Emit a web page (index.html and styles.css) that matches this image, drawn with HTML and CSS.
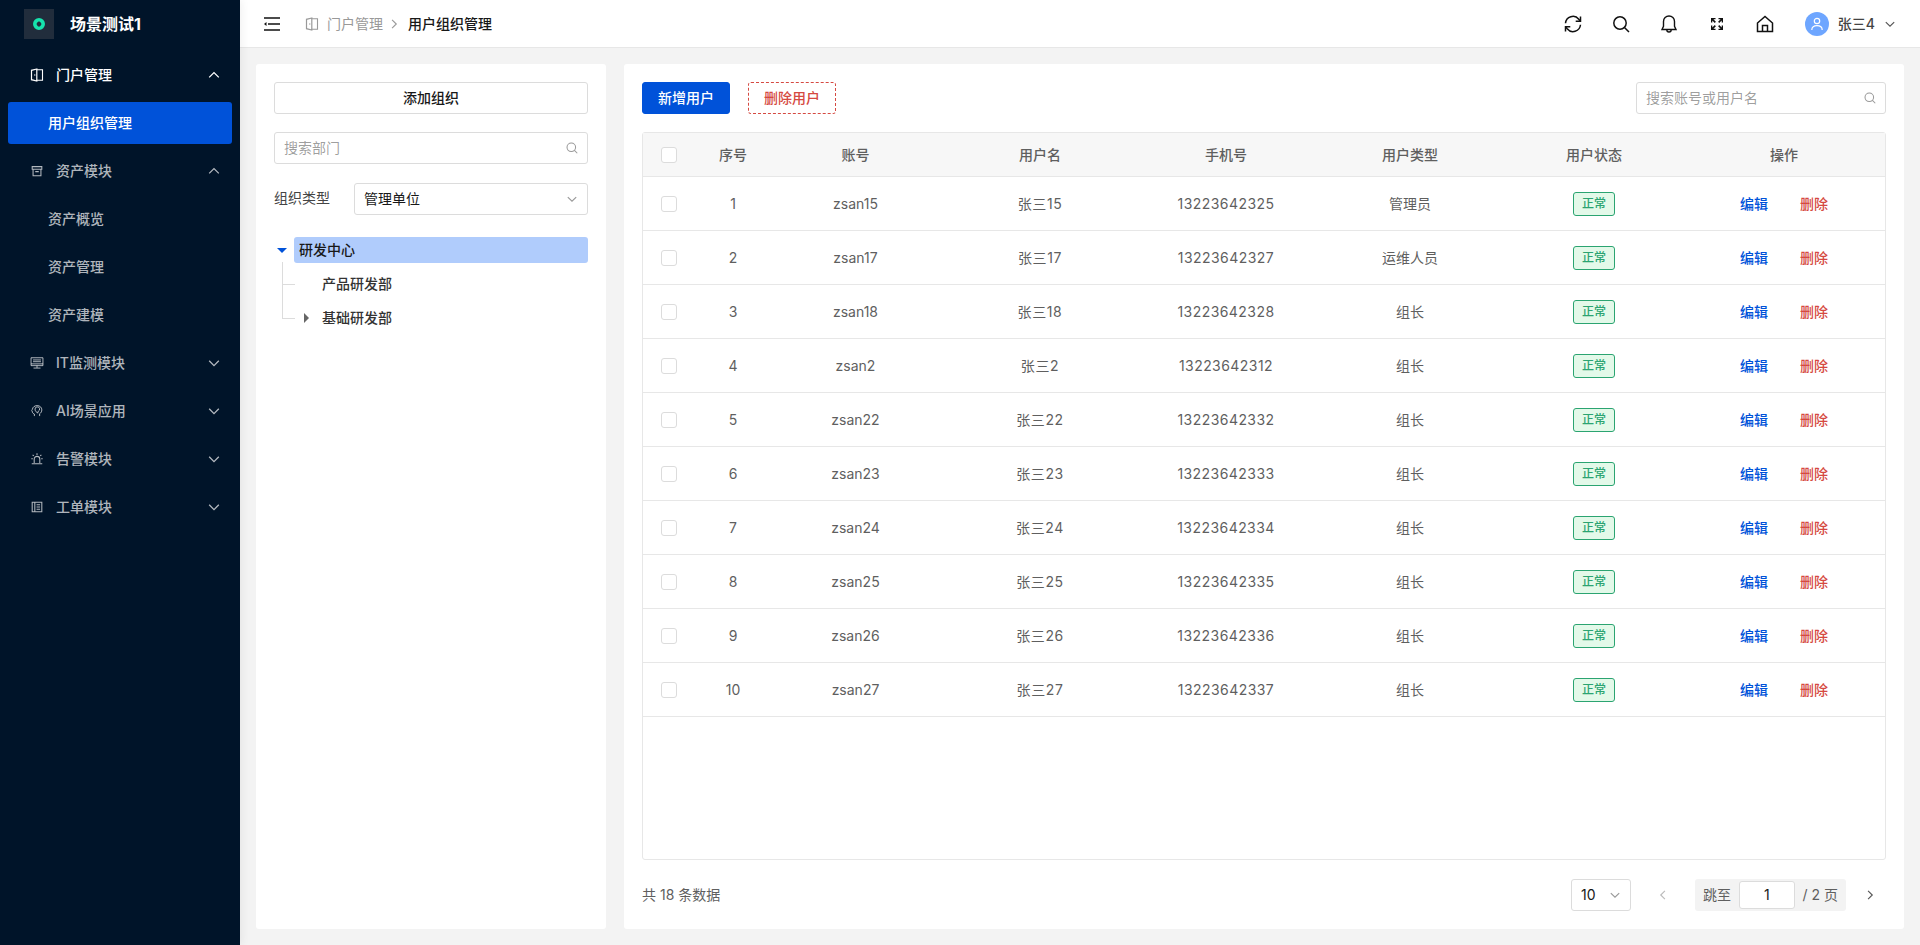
FILE: index.html
```html
<!DOCTYPE html>
<html lang="zh-CN">
<head>
<meta charset="utf-8">
<title>用户组织管理</title>
<link rel="stylesheet" href="styles.css">
</head>
<body>
<svg class="defs" width="0" height="0" aria-hidden="true">
  <defs>
    <symbol id="i-chev-up" viewBox="0 0 16 16"><path d="M3.200 10.400 8 5.600l4.800 4.800" fill="none" stroke="currentColor" stroke-width="1.300"/></symbol>
    <symbol id="i-chev-down" viewBox="0 0 16 16"><path d="M3.200 5.800 8 10.600l4.800-4.800" fill="none" stroke="currentColor" stroke-width="1.300"/></symbol>
    <symbol id="i-chev-left" viewBox="0 0 16 16"><path d="M10.200 3.200 5.400 8l4.800 4.800" fill="none" stroke="currentColor" stroke-width="1.300"/></symbol>
    <symbol id="i-chev-right" viewBox="0 0 16 16"><path d="M5.800 3.200 10.600 8l-4.800 4.800" fill="none" stroke="currentColor" stroke-width="1.300"/></symbol>
    <symbol id="i-search" viewBox="0 0 16 16"><circle cx="7.200" cy="7.200" r="4.900" fill="none" stroke="currentColor" stroke-width="1.200"/><path d="m10.800 10.800 3.200 3.200" fill="none" stroke="currentColor" stroke-width="1.200"/></symbol>
    <symbol id="i-portal" viewBox="0 0 14 14"><path d="M6.500 1.700h6v10.600h-6" fill="none" stroke="currentColor" stroke-width="1.100"/><path d="M6.800 1 1.500 2.300v9.400L6.800 13z" fill="none" stroke="currentColor" stroke-width="1.200"/><path d="M4.800 6.300v1.400" stroke="currentColor" stroke-width="1"/></symbol>
    <symbol id="i-box" viewBox="0 0 16 16"><path d="M2.500 3h11v3h-11zM3.500 6v7.500h9V6M6 8.700h4" fill="none" stroke="currentColor" stroke-width="1.200"/></symbol>
    <symbol id="i-monitor" viewBox="0 0 16 16"><path d="M1.200 2h13.600v9H1.200zM3.500 4.500h9M3.500 6.500h9M1.200 9h13.600M8 11v2.500M4 13.800h8" fill="none" stroke="currentColor" stroke-width="1.100"/></symbol>
    <symbol id="i-ai" viewBox="0 0 16 16"><path d="M5 13.800v-2.300C2.800 10.800 2.500 9 2.500 8c-.8-.4-.6-1 .2-1.800C3 3.500 5.300 1.800 8.300 1.800c3 0 5.200 2.200 5.200 4.900 0 2.300-1.300 3.600-2.500 4.500v2.600M5.800 5.800a2.600 2.600 0 1 1 3.700 2.400L8.700 10.500 6.600 8.200a2.600 2.600 0 0 1-.8-2.400z" fill="none" stroke="currentColor" stroke-width="1.100"/></symbol>
    <symbol id="i-alarm" viewBox="0 0 16 16"><path d="M4.800 12.500V8.200a3.200 3.200 0 0 1 6.400 0v4.300M2 13.500h12M8 1.500v2M3 3.200l1.300 1.300M13 3.200l-1.300 1.300M1.500 7.700h1.700M12.800 7.700h1.700" fill="none" stroke="currentColor" stroke-width="1.200"/></symbol>
    <symbol id="i-order" viewBox="0 0 16 16"><path d="M2.500 2.500h11v11h-11zM5.500 2.500v11M7.500 5.500h4M7.500 8h4M7.500 10.500h4" fill="none" stroke="currentColor" stroke-width="1.200"/></symbol>
  </defs>
</svg>

<aside class="sidebar">
  <div class="brand">
    <div class="brand-logo">
      <svg viewBox="0 0 14 14" width="14" height="14"><path fill-rule="evenodd" d="M7 1a6 6 0 1 1 0 12A6 6 0 0 1 7 1zm0 3.200C5.400 5 4.800 6 4.600 7c.2 1 .8 2 2.400 2.800C8.600 9 9.200 8 9.400 7 9.200 6 8.600 5 7 4.200z" fill="#16e3ad"/></svg>
    </div>
    <span class="brand-name">场景测试1</span>
  </div>
  <nav class="menu">
    <div class="menu-item open"><svg class="menu-icon"><use href="#i-portal"/></svg><span class="menu-text">门户管理</span><svg class="menu-arrow"><use href="#i-chev-up"/></svg></div>
    <div class="menu-sub active">用户组织管理</div>
    <div class="menu-item"><svg class="menu-icon"><use href="#i-box"/></svg><span class="menu-text">资产模块</span><svg class="menu-arrow"><use href="#i-chev-up"/></svg></div>
    <div class="menu-sub">资产概览</div>
    <div class="menu-sub">资产管理</div>
    <div class="menu-sub">资产建模</div>
    <div class="menu-item"><svg class="menu-icon"><use href="#i-monitor"/></svg><span class="menu-text">IT监测模块</span><svg class="menu-arrow"><use href="#i-chev-down"/></svg></div>
    <div class="menu-item"><svg class="menu-icon"><use href="#i-ai"/></svg><span class="menu-text">AI场景应用</span><svg class="menu-arrow"><use href="#i-chev-down"/></svg></div>
    <div class="menu-item"><svg class="menu-icon"><use href="#i-alarm"/></svg><span class="menu-text">告警模块</span><svg class="menu-arrow"><use href="#i-chev-down"/></svg></div>
    <div class="menu-item"><svg class="menu-icon"><use href="#i-order"/></svg><span class="menu-text">工单模块</span><svg class="menu-arrow"><use href="#i-chev-down"/></svg></div>
  </nav>
</aside>

<div class="main">
  <header class="topbar">
    <svg class="fold-icon" viewBox="0 0 18 14" width="18" height="14"><path d="M1 1h16M5 7h12M1 13h16" fill="none" stroke="#111" stroke-width="1.500"/><path d="M1 7l2.500-2v4z" fill="#111"/></svg>
    <nav class="crumbs">
      <svg class="crumb-icon"><use href="#i-portal"/></svg>
      <span class="crumb-parent">门户管理</span>
      <svg class="crumb-sep"><use href="#i-chev-right"/></svg>
      <span class="crumb-current">用户组织管理</span>
    </nav>
    <div class="tools">
      <svg class="tool" viewBox="0 0 20 20"><path d="M2.500 9.200A7.500 7.500 0 0 1 15.800 5.200L17 6.800M17.500 10.800A7.500 7.500 0 0 1 4.200 14.800L3 13.200" fill="none" stroke="#111" stroke-width="1.500"/><path d="M17.500 2.500v4.800h-4.800M2.500 17.500v-4.800h4.800" fill="none" stroke="#111" stroke-width="1.500"/></svg>
      <svg class="tool" viewBox="0 0 20 20"><circle cx="9" cy="9" r="6.200" fill="none" stroke="#111" stroke-width="1.500"/><path d="m13.500 13.500 4.500 4.500" fill="none" stroke="#111" stroke-width="1.500"/></svg>
      <svg class="tool" viewBox="0 0 20 20"><path d="M10 2a5.500 5.500 0 0 0-5.500 5.500v4.800L3 15.500h14l-1.500-3.200V7.500A5.500 5.500 0 0 0 10 2zM7.800 15.800c0 1.300 1 2.200 2.200 2.200s2.200-.9 2.200-2.200" fill="none" stroke="#111" stroke-width="1.400"/></svg>
      <svg class="tool" viewBox="0 0 20 20"><path d="M4 4h4.500v1.300H6.400l2.500 2.500-1.100 1.100-2.500-2.500v2.100H4zM16 4h-4.500v1.300h2.100l-2.500 2.500 1.100 1.100 2.500-2.500v2.100H16zM4 16h4.500v-1.300H6.400l2.500-2.500-1.100-1.100-2.500 2.500v-2.100H4zM16 16h-4.500v-1.300h2.100l-2.500-2.500 1.100-1.100 2.500 2.500v-2.100H16z" fill="#111"/></svg>
      <svg class="tool" viewBox="0 0 20 20"><path d="M2.500 9 10 2.500 17.500 9v8.500h-15zM7.500 17.500v-6h5v6" fill="none" stroke="#111" stroke-width="1.500"/></svg>
    </div>
    <div class="user">
      <span class="avatar"><svg viewBox="0 0 16 16" width="16" height="16"><circle cx="8" cy="5" r="2.700" fill="none" stroke="#fff" stroke-width="1.200"/><path d="M2.800 14c0-3 2-4.300 5.200-4.300s5.200 1.300 5.200 4.300" fill="none" stroke="#fff" stroke-width="1.200"/></svg></span>
      <span class="user-name">张三4</span>
      <svg class="user-arrow"><use href="#i-chev-down"/></svg>
    </div>
  </header>

  <main class="content">
    <section class="panel org">
      <button class="btn btn-outline">添加组织</button>
      <div class="input org-search"><span class="placeholder">搜索部门</span><svg class="input-icon"><use href="#i-search"/></svg></div>
      <div class="org-type">
        <span class="org-label">组织类型</span>
        <div class="input org-select"><span class="value">管理单位</span><svg class="input-icon"><use href="#i-chev-down"/></svg></div>
      </div>
      <div class="tree">
        <div class="tree-root">
          <span class="caret-down"></span>
          <span class="tree-selected">研发中心</span>
        </div>
        <div class="tree-children">
          <div class="tree-node"><span class="tree-label">产品研发部</span></div>
          <div class="tree-node"><span class="caret-right"></span><span class="tree-label">基础研发部</span></div>
        </div>
      </div>
    </section>

    <section class="panel users">
      <div class="toolbar">
        <button class="btn btn-primary">新增用户</button>
        <button class="btn btn-danger">删除用户</button>
        <div class="input user-search"><span class="placeholder">搜索账号或用户名</span><svg class="input-icon"><use href="#i-search"/></svg></div>
      </div>
      <div class="table-wrap">
        <table class="table">
          <colgroup>
            <col class="c-check"><col class="c-no"><col class="c-acc"><col class="c-name"><col class="c-phone"><col class="c-type"><col class="c-state"><col class="c-op">
          </colgroup>
          <thead>
            <tr><th><span class="check"></span></th><th>序号</th><th>账号</th><th>用户名</th><th>手机号</th><th>用户类型</th><th>用户状态</th><th class="op-cell">操作</th></tr>
          </thead>
          <tbody>
            <tr><td><span class="check"></span></td><td>1</td><td>zsan15</td><td class="uname">张三15</td><td class="phone">13223642325</td><td>管理员</td><td><span class="tag">正常</span></td><td class="op-cell"><a class="op-edit">编辑</a><a class="op-del">删除</a></td></tr>
            <tr><td><span class="check"></span></td><td>2</td><td>zsan17</td><td class="uname">张三17</td><td class="phone">13223642327</td><td>运维人员</td><td><span class="tag">正常</span></td><td class="op-cell"><a class="op-edit">编辑</a><a class="op-del">删除</a></td></tr>
            <tr><td><span class="check"></span></td><td>3</td><td>zsan18</td><td class="uname">张三18</td><td class="phone">13223642328</td><td>组长</td><td><span class="tag">正常</span></td><td class="op-cell"><a class="op-edit">编辑</a><a class="op-del">删除</a></td></tr>
            <tr><td><span class="check"></span></td><td>4</td><td>zsan2</td><td class="uname">张三2</td><td class="phone">13223642312</td><td>组长</td><td><span class="tag">正常</span></td><td class="op-cell"><a class="op-edit">编辑</a><a class="op-del">删除</a></td></tr>
            <tr><td><span class="check"></span></td><td>5</td><td>zsan22</td><td class="uname">张三22</td><td class="phone">13223642332</td><td>组长</td><td><span class="tag">正常</span></td><td class="op-cell"><a class="op-edit">编辑</a><a class="op-del">删除</a></td></tr>
            <tr><td><span class="check"></span></td><td>6</td><td>zsan23</td><td class="uname">张三23</td><td class="phone">13223642333</td><td>组长</td><td><span class="tag">正常</span></td><td class="op-cell"><a class="op-edit">编辑</a><a class="op-del">删除</a></td></tr>
            <tr><td><span class="check"></span></td><td>7</td><td>zsan24</td><td class="uname">张三24</td><td class="phone">13223642334</td><td>组长</td><td><span class="tag">正常</span></td><td class="op-cell"><a class="op-edit">编辑</a><a class="op-del">删除</a></td></tr>
            <tr><td><span class="check"></span></td><td>8</td><td>zsan25</td><td class="uname">张三25</td><td class="phone">13223642335</td><td>组长</td><td><span class="tag">正常</span></td><td class="op-cell"><a class="op-edit">编辑</a><a class="op-del">删除</a></td></tr>
            <tr><td><span class="check"></span></td><td>9</td><td>zsan26</td><td class="uname">张三26</td><td class="phone">13223642336</td><td>组长</td><td><span class="tag">正常</span></td><td class="op-cell"><a class="op-edit">编辑</a><a class="op-del">删除</a></td></tr>
            <tr><td><span class="check"></span></td><td>10</td><td>zsan27</td><td class="uname">张三27</td><td class="phone">13223642337</td><td>组长</td><td><span class="tag">正常</span></td><td class="op-cell"><a class="op-edit">编辑</a><a class="op-del">删除</a></td></tr>
          </tbody>
        </table>
      </div>
      <footer class="pager">
        <span class="total">共 18 条数据</span>
        <div class="input page-size"><span class="value">10</span><svg class="input-icon"><use href="#i-chev-down"/></svg></div>
        <svg class="page-arrow disabled"><use href="#i-chev-left"/></svg>
        <div class="jump">
          <span>跳至</span>
          <span class="jump-input">1</span>
          <span>/ 2 页</span>
        </div>
        <svg class="page-arrow"><use href="#i-chev-right"/></svg>
      </footer>
    </section>
  </main>
</div>
</body>
</html>
```
FILE: styles.css
```css
* { box-sizing: border-box; }
html, body { height: 100%; }
body {
  margin: 0;
  display: flex;
  height: 100vh;
  overflow: hidden;
  background: #f3f3f3;
  color: #181818;
  font: 14px/22px Inter, "Noto Sans CJK SC", sans-serif;
}
.defs { position: absolute; }

.sidebar {
  width: 240px;
  flex: none;
  background: #001429;
  box-shadow: 2px 0 8px rgba(0, 0, 0, .06);
  position: relative;
  z-index: 1;
}
.brand { height: 51px; display: flex; align-items: flex-start; padding: 9px 0 0 24px; }
.brand-logo {
  width: 30px; height: 30px;
  background: #212d3c;
  display: flex; align-items: center; justify-content: center;
}
.brand-name { margin: 3px 0 0 16px; font-size: 16px; line-height: 24px; font-weight: 700; color: #fff; }
.menu { display: flex; flex-direction: column; gap: 6px; padding: 3px 8px; }
.menu-item, .menu-sub {
  height: 42px;
  display: flex;
  align-items: center;
  font-weight: 500;
  color: rgba(255, 255, 255, .7);
  border-radius: 3px;
}
.menu-item { padding: 0 10px 0 22px; }
.menu-item.open { color: #fff; }
.menu-sub { padding-left: 40px; }
.menu-sub.active { background: #0052d9; color: #fff; }
.menu-icon { width: 14px; height: 14px; margin-right: 12px; flex: none; }
.menu-text { flex: 1; }
.menu-arrow { width: 16px; height: 16px; flex: none; }

.main { flex: 1; min-width: 0; display: flex; flex-direction: column; }
.topbar {
  height: 48px;
  flex: none;
  background: #fff;
  border-bottom: 1px solid #e7e7e7;
  display: flex;
  align-items: center;
  padding: 0 23px 0 23px;
}
.fold-icon { flex: none; }
.crumbs { display: flex; align-items: center; margin-left: 24px; flex: 1; }
.crumb-icon { width: 14px; height: 14px; color: #999; margin-right: 8px; }
.crumb-parent { color: #999; }
.crumb-sep { width: 14px; height: 14px; color: #999; margin: 0 7px 0 4px; }
.crumb-current { color: #181818; font-weight: 500; }
.tools { display: flex; gap: 28px; }
.tool { width: 20px; height: 20px; display: block; }
.user { display: flex; align-items: center; margin-left: 30px; }
.avatar {
  width: 24px; height: 24px;
  border-radius: 50%;
  background: #6ea6ff;
  display: flex; align-items: center; justify-content: center;
}
.user-name { margin-left: 9px; color: #444; font-weight: 500; }
.user-arrow { width: 14px; height: 14px; color: #555; margin-left: 8px; }

.content { flex: 1; min-height: 0; display: flex; gap: 18px; padding: 16px; }
.panel { background: #fff; border-radius: 3px; padding: 18px; display: flex; flex-direction: column; }
.org { width: 350px; flex: none; }
.users { flex: 1; min-width: 0; }

.btn {
  height: 32px;
  border-radius: 3px;
  font: inherit;
  font-weight: 500;
  cursor: pointer;
  background: #fff;
}
.btn-outline { border: 1px solid #dcdcdc; color: #181818; width: 100%; }
.btn-primary { width: 88px; border: 1px solid #0052d9; background: #0052d9; color: #fff; }
.btn-danger { width: 88px; border: 1px dashed #d54941; color: #d54941; margin-left: 18px; }

.input {
  height: 32px;
  border: 1px solid #dcdcdc;
  border-radius: 3px;
  background: #fff;
  display: flex;
  align-items: center;
  justify-content: space-between;
  padding: 0 8px 0 9px;
}
.placeholder { color: rgba(0, 0, 0, .4); }
.value { color: #181818; }
.input-icon { width: 14px; height: 14px; color: #999; flex: none; }
.org-search { margin-top: 18px; }
.org-type { display: flex; align-items: center; margin-top: 19px; }
.org-label { width: 80px; color: #444; flex: none; padding-bottom: 3px; }
.org-select { flex: 1; }

.tree { margin-top: 22px; position: relative; }
.tree-root { height: 26px; display: flex; align-items: center; }
.caret-down {
  width: 0; height: 0;
  margin: 0 7px 0 3px;
  border: 5px solid transparent;
  border-top: 5px solid #0052d9;
  border-bottom: 0;
  flex: none;
}
.tree-selected {
  flex: 1;
  height: 26px;
  line-height: 26px;
  padding-left: 5px;
  background: #b0ccfc;
  border-radius: 3px;
  color: #181818;
  font-weight: 500;
}
.tree-children { position: relative; padding-top: 4px; }
.tree-children::before {
  content: "";
  position: absolute;
  left: 8px; top: -1px;
  width: 1px; height: 57px;
  background: #dcdcdc;
}
.tree-node {
  height: 34px;
  display: flex;
  align-items: center;
  position: relative;
  padding-left: 48px;
  font-weight: 500;
  color: #333;
}
.tree-node::before {
  content: "";
  position: absolute;
  left: 8px; top: 17px;
  width: 13px; height: 1px;
  background: #dcdcdc;
}
.caret-right {
  position: absolute;
  left: 30px; top: 12px;
  width: 0; height: 0;
  border: 5px solid transparent;
  border-left: 5px solid #666;
  border-right: 0;
}

.toolbar { display: flex; align-items: center; }
.user-search { width: 250px; margin-left: auto; }
.table-wrap {
  flex: none;
  height: 728px;
  margin-top: 18px;
  border: 1px solid #e7e7e7;
  border-radius: 3px;
}
.table { width: 100%; table-layout: fixed; border-collapse: separate; border-spacing: 0; }
.c-check { width: 52px; }
.c-no { width: 76px; }
.c-acc { width: 169px; }
.c-name { width: 200px; }
.c-phone { width: 172px; }
.c-type { width: 196px; }
.c-state { width: 172px; }
.c-op { width: 205px; }
.table th, .table td {
  padding: 0;
  text-align: center;
  color: #5f5f5f;
  border-bottom: 1px solid #e7e7e7;
}
.table th { height: 44px; background: #f7f7f7; font-weight: 500; }
.table td { height: 54px; }
.table .op-cell { padding-left: 3px; }
.phone { letter-spacing: .45px; }
.uname { letter-spacing: .6px; }
.check {
  display: block;
  width: 16px; height: 16px;
  margin-left: 18px;
  border: 1px solid #dcdcdc;
  border-radius: 3px;
  background: #fff;
}
.tag {
  display: inline-flex;
  align-items: center;
  justify-content: center;
  width: 42px; height: 24px;
  border: 1px solid #2ba471;
  border-radius: 3px;
  background: #e3f9e9;
  color: #2ba471;
  font-size: 12px;
  font-weight: 500;
  vertical-align: middle;
}
.op-edit, .op-del { font-weight: 500; }
.op-edit { color: #0052d9; }
.op-del { color: #d54941; margin-left: 32px; }

.pager { display: flex; align-items: center; margin-top: 19px; height: 32px; }
.total { color: #5f5f5f; flex: 1; }
.page-size { width: 60px; }
.page-arrow { width: 14px; height: 14px; color: #555; margin: 0 25px; flex: none; }
.page-arrow.disabled { color: #bbb; }
.page-arrow:last-child { margin: 0 9px 0 17px; }
.jump {
  width: 151px; height: 32px;
  background: #f3f3f3;
  border-radius: 3px;
  display: flex;
  align-items: center;
  justify-content: space-between;
  padding: 0 8px;
  color: #5f5f5f;
}
.jump-input {
  width: 56px; height: 28px;
  line-height: 26px;
  background: #fff;
  border: 1px solid #dcdcdc;
  border-radius: 3px;
  text-align: center;
  color: #181818;
}
```
